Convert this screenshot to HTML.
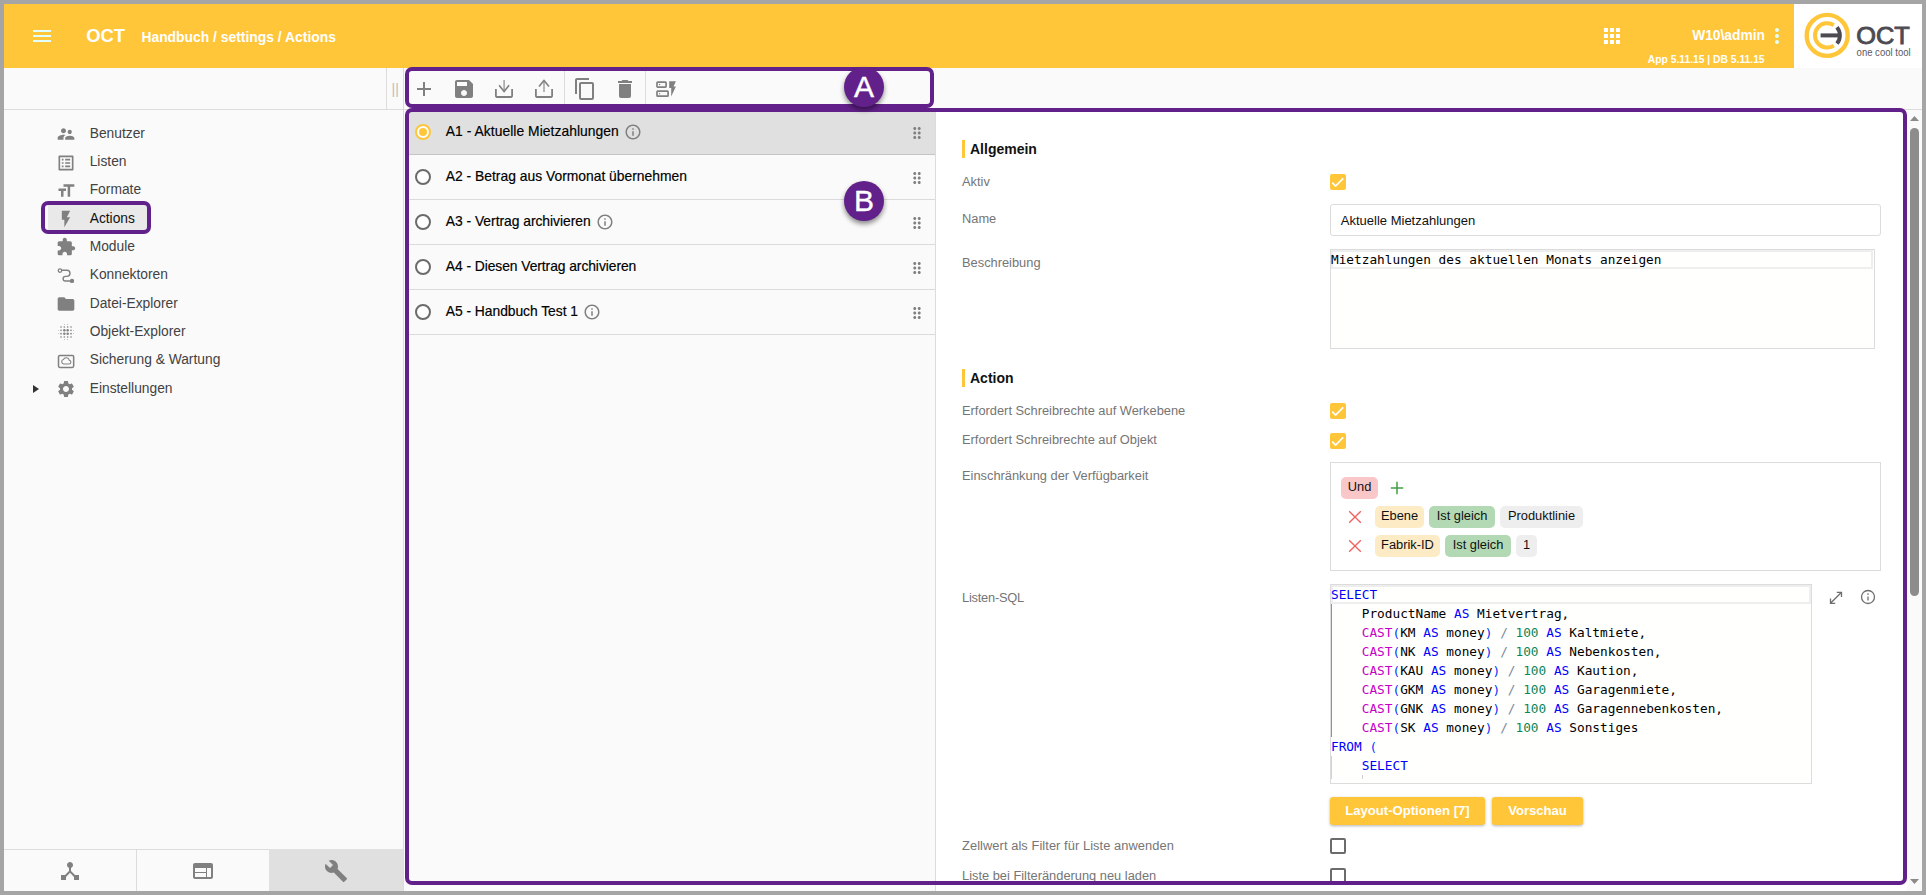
<!DOCTYPE html>
<html lang="de">
<head>
<meta charset="utf-8">
<title>OCT - Handbuch / settings / Actions</title>
<style>
*{box-sizing:border-box;margin:0;padding:0}
html,body{width:1926px;height:895px;overflow:hidden;background:#a5a5a5;font-family:"Liberation Sans",sans-serif;color:#111}
body{position:relative}
.a{position:absolute}
.t{position:absolute;white-space:pre;line-height:20px;height:20px}
svg{position:absolute;display:block;overflow:visible}
.ic{fill:#808080}
/* frame + base */
#base{left:4px;top:4px;width:1918px;height:887px;background:#fafafa}
#hdr{left:4px;top:4px;width:1790px;height:64px;background:#ffc63a}
#logo{left:1794px;top:4px;width:128px;height:64px;background:#fff}
.hl{background:#dcdcdc}
.w{color:#fff;font-weight:bold}
.pb{border:4px solid #62218a;border-radius:7px}
.circ{width:40px;height:40px;border-radius:50%;background:#62218a;color:#fff;font-size:30px;line-height:40px;text-align:center;box-shadow:0 3px 5px rgba(0,0,0,.45);-webkit-text-stroke:.400px #fff}
/* sidebar */
.nav{left:89.7px;font-size:13.8px;color:#444}
/* list */
.row{left:409px;width:526px;height:45px;border-bottom:1px solid rgba(0,0,0,.12)}
.rt{left:445.8px;font-size:13.87px;color:#000;-webkit-text-stroke:.180px #000}
.radio{left:415px;width:16px;height:16px;border-radius:50%;border:2px solid #6b6b6b;background:#fff}
/* form */
.lbl{left:962px;font-size:12.85px;color:#757575}
.sec{left:970px;font-size:14px;font-weight:bold;color:#111}
.bar{left:962px;width:3px;height:18px;background:#ffc63a}
.cb{left:1330px;width:16px;height:16px;border-radius:2px}
.cb.on{background:#ffc63a}
.cb.off{border:2px solid #6b6b6b;background:#fff}
.chip{height:22px;line-height:20px;border-radius:5px;font-size:12.85px;color:#111;text-align:center;white-space:pre}
.mono{font-family:"DejaVu Sans Mono","Liberation Mono",monospace;font-size:12.78px;line-height:19px;white-space:pre;color:#000}
.k{color:#0000ff}.f{color:#c700c7}.b{color:#0431fa}.n{color:#098658}.o{color:#778899}
.btn{top:797px;height:28px;line-height:28px;border-radius:3px;background:#ffc63a;color:#fff;font-weight:bold;font-size:13.1px;text-align:center;box-shadow:0 1px 3px rgba(0,0,0,.3);white-space:pre}
</style>
</head>
<body>
<div class="a" id="base"></div>

<!-- ===== header ===== -->
<div class="a" id="hdr"></div>
<div class="a" id="logo"></div>
<svg class="a" style="left:30px;top:24px" width="24" height="24" viewBox="0 0 24 24" fill="#e2fffb"><path d="M3 18h18v-2H3v2zm0-5h18v-2H3v2zm0-7v2h18V6H3z"/></svg>
<div class="t w" style="left:86.2px;top:26px;font-size:18.4px">OCT</div>
<div class="t w" style="left:141.4px;top:27px;font-size:13.88px">Handbuch / settings / Actions</div>
<svg class="a" style="left:1600px;top:24px" width="24" height="24" viewBox="0 0 24 24" fill="#fff"><path d="M4 8h4V4H4v4zm6 12h4v-4h-4v4zm-6 0h4v-4H4v4zm0-6h4v-4H4v4zm6 0h4v-4h-4v4zm6-10v4h4V4h-4zm-6 4h4V4h-4v4zm6 6h4v-4h-4v4zm0 6h4v-4h-4v4z"/></svg>
<div class="t w" style="left:1565px;width:200px;text-align:right;top:25px;font-size:13.81px">W10\admin</div>
<div class="t w" style="left:1565px;width:199.6px;text-align:right;top:49.5px;font-size:10.3px">App 5.11.15 | DB 5.11.15</div>
<svg class="a" style="left:1765px;top:24px" width="24" height="24" viewBox="0 0 24 24" fill="#e2fffb"><path d="M12 8c1.1 0 2-.9 2-2s-.9-2-2-2-2 .9-2 2 .9 2 2 2zm0 2c-1.1 0-2 .9-2 2s.9 2 2 2 2-.9 2-2-.9-2-2-2zm0 6c-1.1 0-2 .9-2 2s.9 2 2 2 2-.9 2-2-.9-2-2-2z"/></svg>
<!-- logo -->
<svg class="a" style="left:1794px;top:4px" width="128" height="64" viewBox="0 0 128 64">
  <circle cx="33.2" cy="31.4" r="20.5" fill="none" stroke="#ffc63a" stroke-width="4.4"/>
  <path d="M39.85 21.17 A12.2 12.2 0 1 0 39.85 41.63" fill="none" stroke="#ffc63a" stroke-width="4"/>
  <path d="M42.930 23.240 A12.700 12.700 0 0 1 42.930 39.560" fill="none" stroke="#4d4a52" stroke-width="3.900"/>
  <line x1="26.6" y1="31.4" x2="45" y2="31.4" stroke="#4d4a52" stroke-width="4"/>
  <text x="62.200" y="40.250" font-family="Liberation Sans, sans-serif" font-size="24.200" fill="#4d4a52" stroke="#4d4a52" stroke-width=".900" textLength="53.500" lengthAdjust="spacingAndGlyphs">OCT</text>
  <text x="62.6" y="51.6" font-family="Liberation Sans, sans-serif" font-size="10" fill="#5a5860" textLength="54" lengthAdjust="spacingAndGlyphs">one cool tool</text>
</svg>
<!--HEADER-->

<!-- ===== lines ===== -->
<div class="a hl" style="left:4px;top:109px;width:1918px;height:1px"></div>
<div class="a hl" style="left:386px;top:68px;width:1px;height:41px"></div>
<div class="a hl" style="left:403px;top:68px;width:1px;height:823px"></div>
<!-- ===== sidebar ===== -->
<div class="a" style="left:47.500px;top:204px;width:100px;height:28.300px;background:#e9e9e9"></div>
<div class="t" style="left:391.500px;top:78.500px;font-size:14px;color:#bcbcbc;letter-spacing:.100px">||</div>
<svg class="a ic" style="left:56px;top:123.9px" width="20" height="20" viewBox="0 0 24 24"><path d="M16.5 12c1.38 0 2.49-1.12 2.49-2.5S17.88 7 16.5 7C15.12 7 14 8.12 14 9.500s1.120 2.500 2.500 2.500zM9 11c1.660 0 2.990-1.340 2.990-3S10.660 5 9 5C7.340 5 6 6.340 6 8s1.340 3 3 3zm7.500 3c-1.830 0-5.500.920-5.500 2.750V19h11v-2.250c0-1.830-3.670-2.750-5.500-2.750zM9 13c-2.330 0-7 1.170-7 3.500V19h7v-2.250c0-.850.330-2.340 2.370-3.470C10.500 13.100 9.660 13 9 13z"/></svg><div class="t nav" style="top:123.6px;color:#424242">Benutzer</div>
<svg class="a ic" style="left:56px;top:152.8px" width="20" height="20" viewBox="0 0 24 24"><path d="M19 5v14H5V5h14m1.100-2H3.900c-.500 0-.900.400-.900.900v16.200c0 .400.400.900.900.900h16.200c.400 0 .900-.500.900-.900V3.900c0-.500-.500-.900-.900-.900zM11 7h6v2h-6V7zm0 4h6v2h-6v-2zm0 4h6v2h-6v-2zM7 7h2v2H7V7zm0 4h2v2H7v-2zm0 4h2v2H7v-2z"/></svg><div class="t nav" style="top:151.9px;color:#424242">Listen</div>
<svg class="a ic" style="left:56px;top:181.1px" width="20" height="20" viewBox="0 0 24 24"><path d="M9 4v3h5v12h3V7h5V4H9zm-6 8h3v7h3v-7h3V9H3v3z"/></svg><div class="t nav" style="top:180.2px;color:#424242">Formate</div>
<svg class="a ic" style="left:56px;top:209.2px" width="20" height="20" viewBox="0 0 24 24"><path d="M7 2v11h3v9l7-12h-4l4-8z"/></svg><div class="t nav" style="top:208.5px;color:#111">Actions</div>
<svg class="a ic" style="left:56px;top:237.4px" width="20" height="20" viewBox="0 0 24 24"><path d="M20.500 11H19V7c0-1.100-.900-2-2-2h-4V3.500C13 2.120 11.880 1 10.500 1S8 2.120 8 3.500V5H4c-1.100 0-1.990.900-1.990 2v3.800H3.500c1.490 0 2.700 1.210 2.700 2.700s-1.210 2.700-2.700 2.700H2V20c0 1.100.900 2 2 2h3.800v-1.500c0-1.490 1.210-2.700 2.700-2.700 1.490 0 2.700 1.210 2.700 2.700V22H17c1.100 0 2-.900 2-2v-4h1.500c1.380 0 2.500-1.120 2.500-2.500S21.880 11 20.500 11z"/></svg><div class="t nav" style="top:236.8px;color:#424242">Module</div>
<svg class="a ic" style="left:56px;top:265.6px" width="20" height="20" viewBox="0 0 24 24"><g transform="translate(0,-1.700) scale(1.2)"><circle cx="4" cy="6.000" r="1.750" fill="none" stroke="#808080" stroke-width="1.200"/><path d="M5.900 5.600H10.900a3.100 3.100 0 0 1 0 6.200H9.400a2.300 2.300 0 0 0 0 4.600H14" fill="none" stroke="#808080" stroke-width="1.400"/><circle cx="16" cy="16.300" r="2.200"/></g></svg><div class="t nav" style="top:265.1px;color:#424242">Konnektoren</div>
<svg class="a ic" style="left:56px;top:293.9px" width="20" height="20" viewBox="0 0 24 24"><path d="M10 4H4c-1.100 0-1.990.900-1.990 2L2 18c0 1.100.900 2 2 2h16c1.100 0 2-.900 2-2V8c0-1.100-.900-2-2-2h-8l-2-2z"/></svg><div class="t nav" style="top:294.1px;color:#424242">Datei-Explorer</div>
<svg class="a ic" style="left:56px;top:321.8px" width="20" height="20" viewBox="0 0 24 24"><circle cx="10" cy="10" r="1.5"/><circle cx="14" cy="10" r="1.5"/><circle cx="10" cy="14" r="1.5"/><circle cx="14" cy="14" r="1.5"/><circle cx="6" cy="6" r="1"/><circle cx="10" cy="6" r="1"/><circle cx="14" cy="6" r="1"/><circle cx="18" cy="6" r="1"/><circle cx="6" cy="10" r="1"/><circle cx="18" cy="10" r="1"/><circle cx="6" cy="14" r="1"/><circle cx="18" cy="14" r="1"/><circle cx="6" cy="18" r="1"/><circle cx="10" cy="18" r="1"/><circle cx="14" cy="18" r="1"/><circle cx="18" cy="18" r="1"/><circle cx="3" cy="10" r=".5"/><circle cx="3" cy="14" r=".5"/><circle cx="21" cy="10" r=".5"/><circle cx="21" cy="14" r=".5"/><circle cx="10" cy="3" r=".5"/><circle cx="14" cy="3" r=".5"/><circle cx="10" cy="21" r=".5"/><circle cx="14" cy="21" r=".5"/></svg><div class="t nav" style="top:321.7px;color:#424242">Objekt-Explorer</div>
<svg class="a ic" style="left:56px;top:350.5px" width="20" height="20" viewBox="0 0 24 24"><rect x="3" y="5.400" width="18.200" height="14.300" rx="1.600" fill="none" stroke="#808080" stroke-width="1.800"/><path d="M9.200 15.600H15.600a2.300 2.300 0 0 0 .300-4.580a3.700 3.700 0 0 0-7.050-.700A2.700 2.700 0 0 0 9.200 15.600z" fill="none" stroke="#808080" stroke-width="1.300"/></svg><div class="t nav" style="top:350.0px;color:#424242">Sicherung &amp; Wartung</div>
<svg class="a ic" style="left:56px;top:378.9px" width="20" height="20" viewBox="0 0 24 24"><path d="M19.140 12.940c.040-.300.060-.610.060-.940 0-.320-.020-.640-.070-.940l2.030-1.580c.180-.140.230-.410.120-.610l-1.920-3.320c-.120-.220-.370-.290-.590-.220l-2.390.960c-.500-.380-1.030-.700-1.620-.940l-.360-2.540c-.040-.240-.240-.410-.480-.410h-3.840c-.240 0-.430.170-.470.410l-.360 2.540c-.590.240-1.130.570-1.620.940l-2.390-.960c-.220-.080-.470 0-.590.220L2.740 8.870c-.120.210-.080.470.120.610l2.030 1.580c-.050.300-.090.630-.090.940s.020.640.070.940l-2.030 1.580c-.180.140-.230.410-.120.610l1.920 3.320c.120.220.370.290.590.220l2.390-.960c.500.380 1.030.700 1.620.940l.360 2.540c.050.240.240.410.480.410h3.840c.240 0 .440-.170.470-.410l.360-2.540c.590-.240 1.130-.560 1.620-.940l2.390.960c.220.080.470 0 .590-.220l1.920-3.320c.120-.220.070-.470-.120-.610l-2.010-1.580zM12 15.600c-1.980 0-3.600-1.620-3.600-3.600s1.620-3.600 3.600-3.600 3.600 1.620 3.600 3.600-1.620 3.600-3.600 3.600z"/></svg><div class="t nav" style="top:379.0px;color:#424242">Einstellungen</div>
<svg class="a" style="left:33px;top:385px" width="6" height="8" viewBox="0 0 6 8"><path d="M0 0L6 4L0 8z" fill="#333"/></svg>
<div class="a hl" style="left:4px;top:849px;width:399px;height:1px"></div>
<div class="a" style="left:269px;top:849px;width:134px;height:42px;background:#e0e0e0"></div>
<div class="a hl" style="left:136px;top:850px;width:1px;height:41px"></div>
<svg class="a ic" style="left:58px;top:859px" width="24" height="24" viewBox="0 0 24 24"><path d="M17 16l-4-4V8.820C14.160 8.400 15 7.300 15 6c0-1.660-1.340-3-3-3S9 4.340 9 6c0 1.300.840 2.400 2 2.820V12l-4 4H3v5h5v-3.050l4-4.200 4 4.200V21h5v-5h-4z"/></svg>
<svg class="a ic" style="left:191px;top:859px" width="24" height="24" viewBox="0 0 24 24"><path d="M20 4H4c-1.100 0-1.990.900-1.990 2L2 18c0 1.100.900 2 2 2h16c1.100 0 2-.900 2-2V6c0-1.100-.900-2-2-2zm-5 14H4v-4h11v4zm0-5H4V9h11v4zm5 5h-4V9h4v9z"/></svg>
<svg class="a ic" style="left:324px;top:859px" width="24" height="24" viewBox="0 0 24 24"><path d="M22.700 19l-9.100-9.100c.900-2.300.400-5-1.500-6.900-2-2-5-2.400-7.400-1.300L9 6 6 9 1.600 4.700C.400 7.100.900 10.100 2.900 12.100c1.900 1.900 4.600 2.400 6.900 1.500l9.100 9.100c.400.400 1 .400 1.400 0l2.300-2.300c.500-.400.500-1.100.100-1.400z"/></svg>
<!--SIDEBAR-->

<!-- ===== main panels inside box B ===== -->
<div class="a" style="left:404px;top:110px;width:531px;height:781px;background:#fafafa"></div>
<div class="a hl" style="left:935px;top:110px;width:1px;height:781px"></div>
<div class="a" style="left:936px;top:110px;width:971px;height:781px;background:#fff"></div>
<!-- ===== list ===== -->
<div class="a row" style="top:110px;background:#e0e0e0"></div><div class="a radio" style="top:123.5px;border-color:#ffc63a"></div><div class="a" style="left:419px;top:127.5px;width:8px;height:8px;border-radius:50%;background:#ffc63a"></div><div class="t rt" style="top:121.0px"><span style="letter-spacing:.045px">A1 - Aktuelle Mietzahlungen</span><svg class="ic" style="position:relative;display:inline-block;vertical-align:top;margin-left:5.500px;top:1.500px" width="18" height="18" viewBox="0 0 24 24"><path d="M11 7h2v2h-2zm0 4h2v6h-2zm1-9C6.480 2 2 6.480 2 12s4.480 10 10 10 10-4.480 10-10S17.520 2 12 2zm0 18c-4.410 0-8-3.590-8-8s3.590-8 8-8 8 3.590 8 8-3.590 8-8 8z"/></svg></div><svg class="a ic" style="left:908px;top:123.5px" width="18" height="18" viewBox="0 0 24 24"><path d="M11 18c0 1.100-.900 2-2 2s-2-.900-2-2 .900-2 2-2 2 .900 2 2zm-2-8c-1.100 0-2 .900-2 2s.900 2 2 2 2-.900 2-2-.900-2-2-2zm0-6c-1.100 0-2 .900-2 2s.900 2 2 2 2-.900 2-2-.900-2-2-2zm6 4c1.100 0 2-.900 2-2s-.900-2-2-2-2 .900-2 2 .900 2 2 2zm0 2c-1.100 0-2 .900-2 2s.900 2 2 2 2-.900 2-2-.900-2-2-2zm0 6c-1.100 0-2 .900-2 2s.900 2 2 2 2-.900 2-2-.900-2-2-2z"/></svg>
<div class="a row" style="top:155px"></div><div class="a radio" style="top:168.5px"></div><div class="t rt" style="top:166.0px"><span>A2 - Betrag aus Vormonat übernehmen</span></div><svg class="a ic" style="left:908px;top:168.5px" width="18" height="18" viewBox="0 0 24 24"><path d="M11 18c0 1.100-.900 2-2 2s-2-.900-2-2 .900-2 2-2 2 .900 2 2zm-2-8c-1.100 0-2 .900-2 2s.900 2 2 2 2-.900 2-2-.900-2-2-2zm0-6c-1.100 0-2 .900-2 2s.900 2 2 2 2-.900 2-2-.900-2-2-2zm6 4c1.100 0 2-.900 2-2s-.900-2-2-2-2 .900-2 2 .900 2 2 2zm0 2c-1.100 0-2 .900-2 2s.900 2 2 2 2-.900 2-2-.900-2-2-2zm0 6c-1.100 0-2 .900-2 2s.900 2 2 2 2-.900 2-2-.900-2-2-2z"/></svg>
<div class="a row" style="top:200px"></div><div class="a radio" style="top:213.5px"></div><div class="t rt" style="top:211.0px"><span style="letter-spacing:-.030px">A3 - Vertrag archivieren</span><svg class="ic" style="position:relative;display:inline-block;vertical-align:top;margin-left:5.500px;top:1.500px" width="18" height="18" viewBox="0 0 24 24"><path d="M11 7h2v2h-2zm0 4h2v6h-2zm1-9C6.480 2 2 6.480 2 12s4.480 10 10 10 10-4.480 10-10S17.520 2 12 2zm0 18c-4.410 0-8-3.590-8-8s3.590-8 8-8 8 3.590 8 8-3.590 8-8 8z"/></svg></div><svg class="a ic" style="left:908px;top:213.5px" width="18" height="18" viewBox="0 0 24 24"><path d="M11 18c0 1.100-.900 2-2 2s-2-.900-2-2 .900-2 2-2 2 .900 2 2zm-2-8c-1.100 0-2 .900-2 2s.900 2 2 2 2-.900 2-2-.900-2-2-2zm0-6c-1.100 0-2 .900-2 2s.900 2 2 2 2-.900 2-2-.900-2-2-2zm6 4c1.100 0 2-.900 2-2s-.900-2-2-2-2 .900-2 2 .900 2 2 2zm0 2c-1.100 0-2 .900-2 2s.900 2 2 2 2-.900 2-2-.900-2-2-2zm0 6c-1.100 0-2 .900-2 2s.900 2 2 2 2-.900 2-2-.900-2-2-2z"/></svg>
<div class="a row" style="top:245px"></div><div class="a radio" style="top:258.5px"></div><div class="t rt" style="top:256.0px"><span style="letter-spacing:-.070px">A4 - Diesen Vertrag archivieren</span></div><svg class="a ic" style="left:908px;top:258.5px" width="18" height="18" viewBox="0 0 24 24"><path d="M11 18c0 1.100-.900 2-2 2s-2-.900-2-2 .900-2 2-2 2 .900 2 2zm-2-8c-1.100 0-2 .900-2 2s.900 2 2 2 2-.900 2-2-.900-2-2-2zm0-6c-1.100 0-2 .900-2 2s.900 2 2 2 2-.900 2-2-.900-2-2-2zm6 4c1.100 0 2-.900 2-2s-.900-2-2-2-2 .900-2 2 .900 2 2 2zm0 2c-1.100 0-2 .900-2 2s.900 2 2 2 2-.900 2-2-.900-2-2-2zm0 6c-1.100 0-2 .900-2 2s.900 2 2 2 2-.900 2-2-.900-2-2-2z"/></svg>
<div class="a row" style="top:290px"></div><div class="a radio" style="top:303.5px"></div><div class="t rt" style="top:301.0px"><span style="letter-spacing:-.045px">A5 - Handbuch Test 1</span><svg class="ic" style="position:relative;display:inline-block;vertical-align:top;margin-left:5.500px;top:1.500px" width="18" height="18" viewBox="0 0 24 24"><path d="M11 7h2v2h-2zm0 4h2v6h-2zm1-9C6.480 2 2 6.480 2 12s4.480 10 10 10 10-4.480 10-10S17.520 2 12 2zm0 18c-4.410 0-8-3.590-8-8s3.590-8 8-8 8 3.590 8 8-3.590 8-8 8z"/></svg></div><svg class="a ic" style="left:908px;top:303.5px" width="18" height="18" viewBox="0 0 24 24"><path d="M11 18c0 1.100-.900 2-2 2s-2-.900-2-2 .900-2 2-2 2 .900 2 2zm-2-8c-1.100 0-2 .900-2 2s.900 2 2 2 2-.900 2-2-.900-2-2-2zm0-6c-1.100 0-2 .900-2 2s.900 2 2 2 2-.900 2-2-.900-2-2-2zm6 4c1.100 0 2-.900 2-2s-.900-2-2-2-2 .900-2 2 .900 2 2 2zm0 2c-1.100 0-2 .900-2 2s.900 2 2 2 2-.900 2-2-.900-2-2-2zm0 6c-1.100 0-2 .900-2 2s.900 2 2 2 2-.900 2-2-.900-2-2-2z"/></svg>
<!--LIST-->
<!-- ===== form ===== -->
<div class="a bar" style="top:140px"></div><div class="t sec" style="top:138.70px">Allgemein</div>
<div class="t lbl" style="top:172.05px">Aktiv</div>
<div class="a cb on" style="top:174px"></div><svg class="a" style="left:1330px;top:174px" width="16" height="16" viewBox="0 0 16 16"><path d="M2.200 8.600L5.600 12L13.200 4.400" fill="none" stroke="#fff" stroke-width="1.700"/></svg>
<div class="t lbl" style="top:208.95px">Name</div>
<div class="a" style="left:1330px;top:204px;width:551px;height:32px;border:1px solid #dcdcdc;border-radius:3px;background:#fff"></div><div class="t" style="left:1340.800px;top:211.400px;font-size:13px;color:#111">Aktuelle Mietzahlungen</div>
<div class="t lbl" style="top:253.05px">Beschreibung</div>
<div class="a" style="left:1330px;top:249px;width:545px;height:100px;border:1px solid #dcdcdc;background:#fffffe"></div><div class="a" style="left:1331px;top:250px;width:542px;height:19px;border:2px solid #eee"></div><div class="a mono" style="left:1331px;top:249.600px">Mietzahlungen des aktuellen Monats anzeigen</div>
<div class="a bar" style="top:369px"></div><div class="t sec" style="top:368.20px">Action</div>
<div class="t lbl" style="top:401.45px">Erfordert Schreibrechte auf Werkebene</div>
<div class="a cb on" style="top:403px"></div><svg class="a" style="left:1330px;top:403px" width="16" height="16" viewBox="0 0 16 16"><path d="M2.200 8.600L5.600 12L13.200 4.400" fill="none" stroke="#fff" stroke-width="1.700"/></svg>
<div class="t lbl" style="top:430.15px">Erfordert Schreibrechte auf Objekt</div>
<div class="a cb on" style="top:433px"></div><svg class="a" style="left:1330px;top:433px" width="16" height="16" viewBox="0 0 16 16"><path d="M2.200 8.600L5.600 12L13.200 4.400" fill="none" stroke="#fff" stroke-width="1.700"/></svg>
<div class="t lbl" style="top:466.35px">Einschränkung der Verfügbarkeit</div>
<div class="a" style="left:1330px;top:462px;width:551px;height:109px;border:1px solid #dcdcdc;background:#fff"></div>
<div class="a chip" style="left:1341px;top:477px;width:37px;background:#f9c7c7">Und</div><svg class="a" style="left:1390px;top:481px" width="14" height="14" viewBox="0 0 14 14"><path d="M7 .800v12.400M.800 7h12.400" stroke="#43a047" stroke-width="1.500" fill="none"/></svg>
<svg class="a" style="left:1347.6px;top:510.3px" width="14" height="14" viewBox="0 0 14 14"><path d="M1.200 1.200l11.600 11.600M12.800 1.200L1.200 12.800" stroke="#f0605d" stroke-width="1.350" fill="none"/></svg><div class="a chip" style="left:1375px;top:506px;width:49px;background:#fdebc6">Ebene</div><div class="a chip" style="left:1429px;top:506px;width:66px;background:#b3d9b4">Ist gleich</div><div class="a chip" style="left:1500px;top:506px;width:83px;background:#eeeeee">Produktlinie</div>
<svg class="a" style="left:1347.6px;top:539.3px" width="14" height="14" viewBox="0 0 14 14"><path d="M1.200 1.200l11.600 11.600M12.800 1.200L1.200 12.800" stroke="#f0605d" stroke-width="1.350" fill="none"/></svg><div class="a chip" style="left:1375px;top:535px;width:65px;background:#fdebc6">Fabrik-ID</div><div class="a chip" style="left:1445px;top:535px;width:66px;background:#b3d9b4">Ist gleich</div><div class="a chip" style="left:1516px;top:535px;width:21px;background:#eeeeee">1</div>
<div class="t lbl" style="top:588.15px;letter-spacing:-.230px">Listen-SQL</div>
<div class="a" style="left:1330px;top:584px;width:482px;height:200px;border:1px solid #dcdcdc;background:#fffffe"></div><div class="a" style="left:1331px;top:585px;width:480px;height:19px;border:2px solid #eee"></div><div class="a" style="left:1331px;top:604px;width:1px;height:133px;background:#939393"></div><div class="a" style="left:1331px;top:756px;width:1px;height:23px;background:#d3d3d3"></div><div class="a" style="left:1362px;top:775px;width:1px;height:4px;background:#d3d3d3"></div>
<div class="a mono" style="left:1331px;top:585.200px"><span class="k">SELECT</span>
    ProductName <span class="k">AS</span> Mietvertrag,
    <span class="f">CAST</span><span class="b">(</span>KM <span class="k">AS</span> money<span class="b">)</span> <span class="o">/</span> <span class="n">100</span> <span class="k">AS</span> Kaltmiete,
    <span class="f">CAST</span><span class="b">(</span>NK <span class="k">AS</span> money<span class="b">)</span> <span class="o">/</span> <span class="n">100</span> <span class="k">AS</span> Nebenkosten,
    <span class="f">CAST</span><span class="b">(</span>KAU <span class="k">AS</span> money<span class="b">)</span> <span class="o">/</span> <span class="n">100</span> <span class="k">AS</span> Kaution,
    <span class="f">CAST</span><span class="b">(</span>GKM <span class="k">AS</span> money<span class="b">)</span> <span class="o">/</span> <span class="n">100</span> <span class="k">AS</span> Garagenmiete,
    <span class="f">CAST</span><span class="b">(</span>GNK <span class="k">AS</span> money<span class="b">)</span> <span class="o">/</span> <span class="n">100</span> <span class="k">AS</span> Garagennebenkosten,
    <span class="f">CAST</span><span class="b">(</span>SK <span class="k">AS</span> money<span class="b">)</span> <span class="o">/</span> <span class="n">100</span> <span class="k">AS</span> Sonstiges
<span class="k">FROM</span> <span class="b">(</span>
    <span class="k">SELECT</span></div>
<svg class="a" style="left:1828px;top:590px" width="16" height="16" viewBox="0 0 16 16" fill="none" stroke="#6e6e6e" stroke-width="1.300"><path d="M2.500 13.300L13.500 2.300M8.800 2.300H13.500V7M2.500 8.600V13.300H7.200"/></svg><svg class="a" style="left:1859.700px;top:589px" width="16" height="16" viewBox="0 0 16 16"><circle cx="8" cy="8" r="6.500" fill="none" stroke="#6e6e6e" stroke-width="1.300"/><path d="M8 7.400v4" stroke="#6e6e6e" stroke-width="1.300"/><circle cx="8" cy="5" r=".850" fill="#6e6e6e"/></svg>
<div class="a btn" style="left:1330px;width:155px">Layout-Optionen [7]</div><div class="a btn" style="left:1492px;width:91px">Vorschau</div>
<div class="t lbl" style="top:836.05px;letter-spacing:.073px">Zellwert als Filter für Liste anwenden</div>
<div class="a cb off" style="top:838px"></div>
<div class="t lbl" style="top:866.15px">Liste bei Filteränderung neu laden</div>
<div class="a cb off" style="top:868px"></div>
<!--FORM-->

<!-- ===== scrollbar ===== -->
<div class="a" style="left:1907px;top:110px;width:15px;height:781px;background:#fafafa"></div>
<svg class="a" style="left:1910px;top:116px" width="9" height="5" viewBox="0 0 9 5"><path d="M0 5L4.500 0L9 5z" fill="#8a8a8a"/></svg>
<div class="a" style="left:1910px;top:128px;width:9px;height:468px;border-radius:4.500px;background:#8c8c8c"></div>
<svg class="a" style="left:1910px;top:879px" width="9" height="5" viewBox="0 0 9 5"><path d="M0 0L4.500 5L9 0z" fill="#8a8a8a"/></svg>
<!--SCROLL-->

<!-- ===== purple annotation boxes ===== -->
<div class="a" style="left:409px;top:69px;width:523px;height:37px;background:#fafafa"></div>
<svg class="a ic" style="left:412px;top:77px" width="24" height="24" viewBox="0 0 24 24"><path d="M19 13h-6v6h-2v-6H5v-2h6V5h2v6h6v2z"/></svg>
<svg class="a ic" style="left:452px;top:77px" width="24" height="24" viewBox="0 0 24 24"><path d="M17 3H5c-1.110 0-2 .900-2 2v14c0 1.100.890 2 2 2h14c1.100 0 2-.900 2-2V7l-4-4zm-5 16c-1.660 0-3-1.340-3-3s1.340-3 3-3 3 1.340 3 3-1.340 3-3 3zm3-10H5V5h10v4z"/></svg>
<svg class="a" style="left:492px;top:77px" width="24" height="24" viewBox="0 0 24 24" fill="none" stroke="#808080"><path d="M3.900 12v7.100a.900.900 0 0 0 .900.900h14.400a.900.900 0 0 0 .900-.900V12" stroke-width="1.800"/><path d="M12.100 3.100v11.700" stroke-width="1.400" stroke="#9a9a9a"/><path d="M7.100 8.300l5 6.200 5-6.200" stroke-width="1.600"/></svg>
<svg class="a" style="left:532px;top:77px" width="24" height="24" viewBox="0 0 24 24" fill="none" stroke="#808080"><path d="M3.900 12v7.100a.900.900 0 0 0 .900.900h14.400a.900.900 0 0 0 .900-.900V12" stroke-width="1.800"/><path d="M12 3.600v11.400" stroke-width="1.400" stroke="#9a9a9a"/><path d="M7 9.500l5-6 5 6" stroke-width="1.600"/></svg>
<div class="a hl" style="left:564px;top:71px;width:1px;height:33px"></div>
<svg class="a ic" style="left:573px;top:77px" width="24" height="24" viewBox="0 0 24 24"><path d="M16 1H4c-1.100 0-2 .900-2 2v14h2V3h12V1zm3 4H8c-1.100 0-2 .900-2 2v14c0 1.100.900 2 2 2h11c1.100 0 2-.900 2-2V7c0-1.100-.900-2-2-2zm0 16H8V7h11v14z"/></svg>
<svg class="a ic" style="left:613px;top:77px" width="24" height="24" viewBox="0 0 24 24"><path d="M6 19c0 1.100.900 2 2 2h8c1.100 0 2-.900 2-2V7H6v12zM19 4h-3.500l-1-1h-5l-1 1H5v2h14V4z"/></svg>
<div class="a hl" style="left:645px;top:71px;width:1px;height:33px"></div>
<svg class="a" style="left:654px;top:77px" width="24" height="24" viewBox="0 0 24 24"><g fill="none" stroke="#808080" stroke-width="1.700"><rect x="3" y="5.050" width="9.100" height="5" rx=".700"/><rect x="3" y="14.150" width="11.100" height="5" rx=".700"/></g><circle cx="5.600" cy="7.550" r=".700" fill="#808080"/><circle cx="5.600" cy="16.650" r=".700" fill="#808080"/><path d="M15.200 4.200h6.700l-2.400 5.400h2.400l-4.700 10v-8.600h-2z" fill="#808080"/></svg>
<!--TOOLBAR-->
<div class="a pb" style="left:405px;top:108px;width:1502px;height:777px"></div>
<div class="a pb" style="left:405px;top:67px;width:529px;height:41px"></div>
<div class="a pb" style="left:41px;top:201px;width:110px;height:33px;border-radius:7px"></div>
<div class="a circ" style="left:844px;top:67.400px">A</div>
<div class="a circ" style="left:844px;top:180.800px">B</div>
</body>
</html>
